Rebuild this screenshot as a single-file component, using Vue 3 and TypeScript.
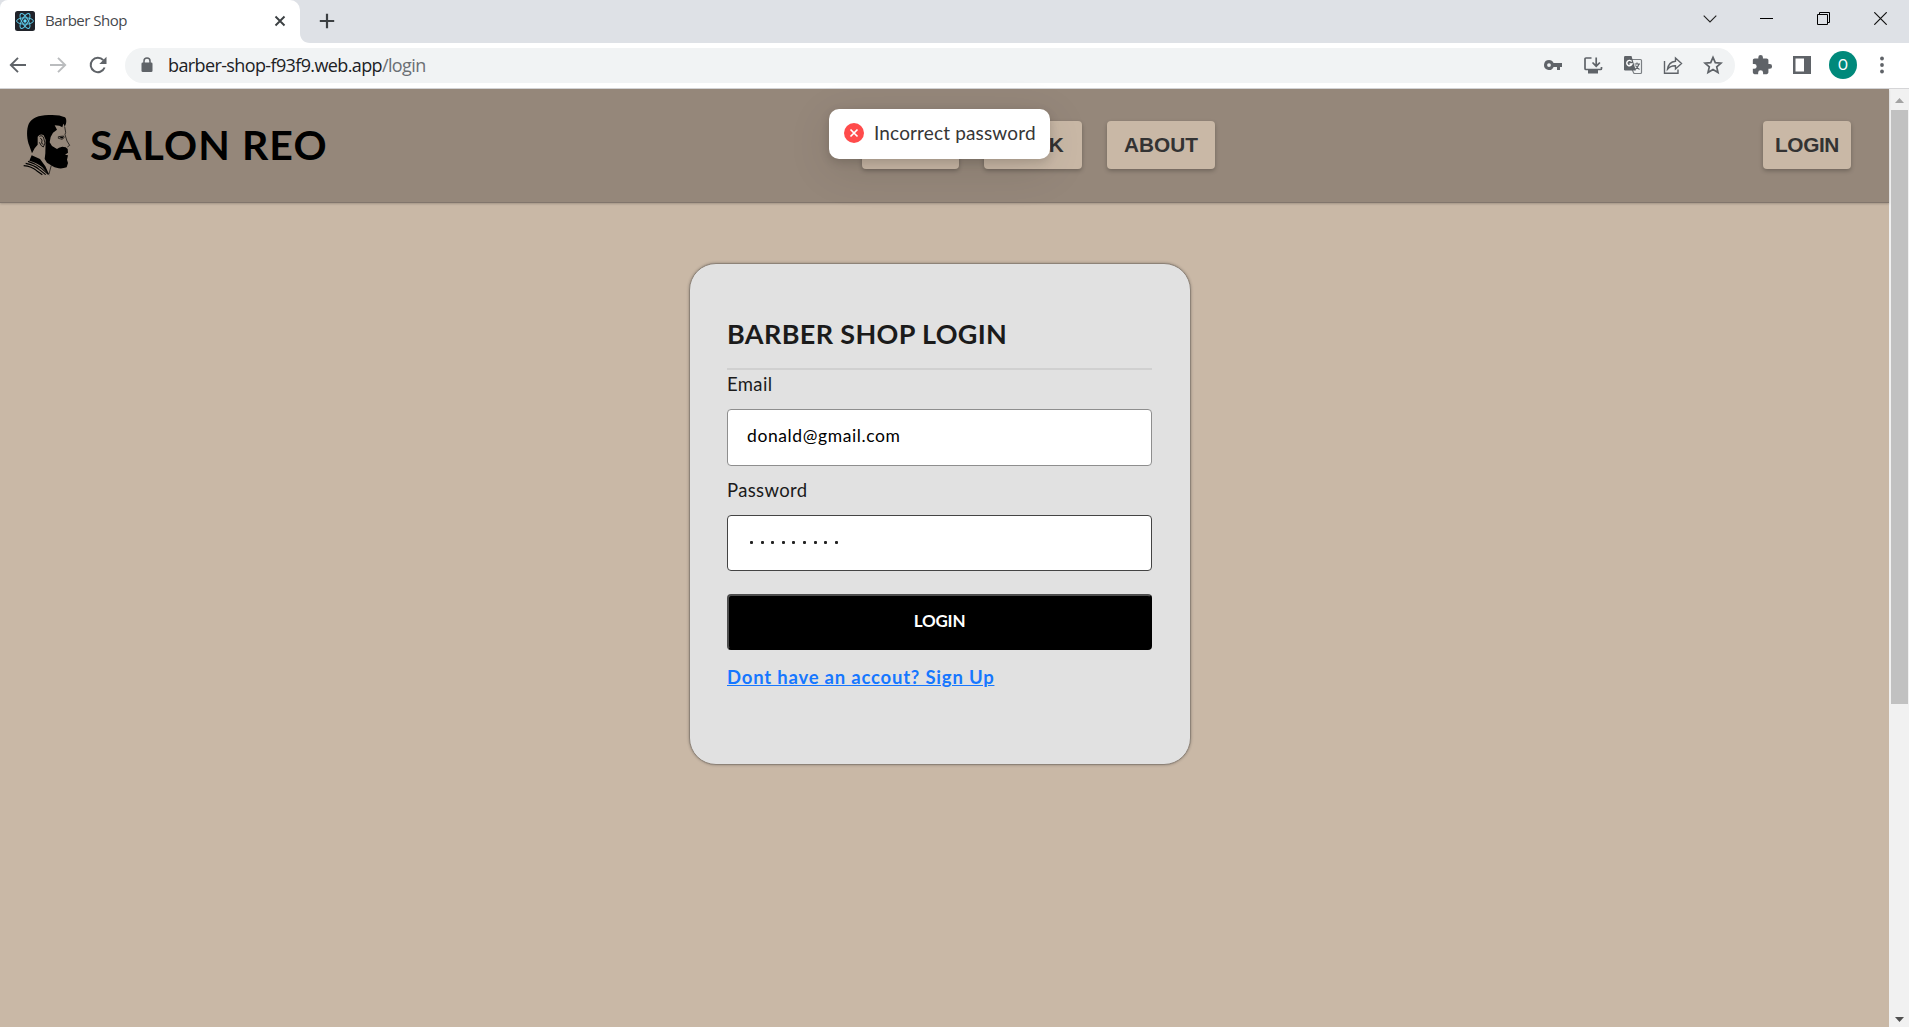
<script setup lang="ts">
import { ref } from 'vue'

const email = ref('donald@gmail.com')
const dots = Array.from({ length: 9 }, (_, i) => i)
const links: string[] = ['HOME', 'BOOK', 'ABOUT']
</script>

<template>
  <div class="window">
    <header class="tabs">
      <div class="tab">
        <svg class="favicon" width="20" height="20" viewBox="0 0 20 20">
          <rect width="20" height="20" rx="2.5" fill="#20232a" />
          <g fill="none" stroke="#5bc8e6" stroke-width="1">
            <ellipse cx="10" cy="10" rx="8.4" ry="3.2" />
            <ellipse cx="10" cy="10" rx="8.4" ry="3.2" transform="rotate(60 10 10)" />
            <ellipse cx="10" cy="10" rx="8.4" ry="3.2" transform="rotate(120 10 10)" />
          </g>
          <circle cx="10" cy="10" r="1.7" fill="#61dafb" />
        </svg>
        <span class="tab-title">Barber Shop</span>
        <svg class="tab-close" width="12" height="12" viewBox="0 0 12 12"><path d="M1.5 1.5l9 9M10.5 1.5l-9 9" stroke="#3c4043" stroke-width="1.9" /></svg>
      </div>
      <svg class="curve" width="10" height="10" viewBox="0 0 10 10"><path d="M0 0C0 6 4 10 10 10H0z" fill="#fff" /></svg>
      <svg class="plus" width="16" height="16" viewBox="0 0 16 16"><path d="M8 .8v14.4M.8 8h14.4" stroke="#3c4043" stroke-width="2.2" /></svg>
      <div class="controls">
        <span><svg width="14" height="8" viewBox="0 0 14 8"><path d="M.7 .7L7 7l6.300-6.300" fill="none" stroke="#222" stroke-width="1.1" /></svg></span>
        <span><svg width="13" height="13" viewBox="0 0 13 13"><path d="M0 6.500h13" stroke="#000" stroke-width="1" /></svg></span>
        <span><svg width="13" height="13" viewBox="0 0 13 13"><path d="M.5 2.500h10v10h-10zM2.500 2.500v-2h10v10h-2" fill="none" stroke="#000" stroke-width="1" /></svg></span>
        <span><svg width="13" height="13" viewBox="0 0 13 13"><path d="M.3 .3l12.400 12.400M12.700 .3L.3 12.700" stroke="#111" stroke-width="1.200" /></svg></span>
      </div>
    </header>

    <div class="toolbar">
      <svg class="nav-icon" width="18" height="18" viewBox="0 0 18 18"><path d="M17 9H2M9 1.800L1.800 9 9 16.200" fill="none" stroke="#5f6368" stroke-width="1.900" /></svg>
      <svg class="nav-icon" width="18" height="18" viewBox="0 0 18 18"><path d="M1 9h15M9 1.800L16.200 9 9 16.200" fill="none" stroke="#babcbe" stroke-width="1.900" /></svg>
      <svg class="nav-icon" width="18" height="18" viewBox="0 0 18 18"><path d="M15.600 11.500A7.200 7.200 0 1 1 14.300 4.200" fill="none" stroke="#5f6368" stroke-width="2" /><path d="M17.500 .8V8h-7.200z" fill="#5f6368" /></svg>
      <div class="omnibox">
        <svg class="lock" width="12" height="16" viewBox="0 0 12 16"><rect x=".5" y="5.500" width="11" height="9.500" rx="1.300" fill="#5f6368" /><path d="M3 6V4a3 3 0 0 1 6 0v2" fill="none" stroke="#5f6368" stroke-width="1.500" /></svg>
        <span class="url">barber-shop-f93f9.web.app<em>/login</em></span>
        <div class="slots">
          <span><svg width="20" height="20" viewBox="0 0 20 20"><path fill-rule="evenodd" d="M6 5a5 5 0 1 0 4.600 7H14v3h3v-3h2V8h-8.400A5 5 0 0 0 6 5zm0 3.200a1.900 1.900 0 1 1 0 3.800 1.900 1.900 0 0 1 0-3.800z" fill="#5f6368" /></svg></span>
          <span><svg width="20" height="20" viewBox="0 0 20 20"><path d="M8.500 3H3Q2 3 2 4v9.500Q2 14.500 3 14.500h14.500q1 0 1-1V12M13.200 2.500v8.500M9.500 7.500l3.700 3.700 3.700-3.700" fill="none" stroke="#5f6368" stroke-width="1.700" /><path d="M5 15h10v3.500H5z" fill="#5f6368" /></svg></span>
          <span><svg width="20" height="20" viewBox="0 0 20 20"><path d="M9 4.500h8.500q1 0 1 1v12q0 1-1 1H11l-2-4" fill="#f1f3f4" stroke="#7b7f83" stroke-width="1.200" /><path d="M2.200 1h6.300l4.300 14.500H2.200Q1 15.500 1 14.300V2.200Q1 1 2.200 1z" fill="#5f6368" /><path d="M8.700 6.500A2.700 2.700 0 1 0 9 9H6.500" fill="none" stroke="#fff" stroke-width="1.400" /><path d="M11.500 9H17M14 7.500V9M16 9q-1 3.500-4 5.500M12.500 10.500q1.500 2.500 4 4" fill="none" stroke="#5f6368" stroke-width="1.100" /></svg></span>
          <span><svg width="20" height="20" viewBox="0 0 20 20"><path d="M1.500 6v12.300H15V14.500" fill="none" stroke="#5f6368" stroke-width="1.400" /><path d="M12.500 3l6 5.500-6 5.500v-3.200q-4.800-.3-8 3.400Q5.500 7 12.500 6.200z" fill="none" stroke="#5f6368" stroke-width="1.400" /></svg></span>
          <span><svg width="20" height="20" viewBox="0 0 20 20"><path d="M10 2.300l2.300 5.300 5.800.5-4.400 3.800 1.300 5.600-5-3-5 3 1.300-5.600L1.900 8.100l5.800-.5z" fill="none" stroke="#5f6368" stroke-width="1.700" /></svg></span>
        </div>
      </div>
      <div class="slots outer">
        <span><svg width="22" height="22" viewBox="0 0 24 24"><path d="M20.500 11H19V7c0-1.100-.9-2-2-2h-4V3.500a2.500 2.500 0 0 0-5 0V5H4c-1.100 0-2 .9-2 2v3.800h1.500a2.700 2.700 0 0 1 0 5.400H2V20c0 1.100.9 2 2 2h3.800v-1.500a2.700 2.700 0 0 1 5.400 0V22H17c1.100 0 2-.9 2-2v-4h1.500a2.500 2.500 0 0 0 0-5z" fill="#5f6368" /></svg></span>
        <span><svg width="18" height="18" viewBox="0 0 18 18"><path fill-rule="evenodd" d="M0 0h18v18H0zM2.500 2.500v13H11v-13z" fill="#5f6368" /></svg></span>
        <span class="wide"><b class="avatar">O</b></span>
        <span class="narrow"><svg width="4" height="18" viewBox="0 0 4 18"><g fill="#5f6368"><circle cx="2" cy="2.500" r="1.900" /><circle cx="2" cy="9" r="1.900" /><circle cx="2" cy="15.500" r="1.900" /></g></svg></span>
      </div>
    </div>

    <div class="viewport">
      <div class="page">
        <nav class="navbar">
          <div class="brand">
            <svg width="50" height="64" viewBox="36 24 150 192">
              <path d="M66 145L58 122C51 105 49 80 54 63C59 44 78 33 104 31C130 28 152 30 165 37C170 41 171 55 164 65C163 61 162 58 160 56L157 67L148 62L134 61L141 74L129 83L122 96L119 112L126 123L141 132L147 128L157 125L167 127L173 132L174 143L165 149L174 151L171 164L174 174L170 187C156 192 141 191 128 184L111 173L104 162L106 145L107 104L101 91Q91 85 83 95L83 119L74 130Z" />
              <path d="M88 94q10-5 13 5l4 15-5 12-6-4-6-10M91 99l5 6-1 10 5 3" fill="none" stroke="#000" stroke-width="2.500" />
              <path d="M145 95l16-2 1 5-5 5-12-3zM164 65l3 17-2 7 6 19 8 13-7 5" fill="none" stroke="#000" stroke-width="2" />
              <path d="M146 95h15l-4 6z" />
              <path d="M65 151L90 162L106 184L119 212L97 187Q82 173 58 167Z" />
              <path d="M54 169Q75 175 92 188L115 208M47 175Q73 180 87 193L107 209M41 182Q65 184 80 197L97 209" fill="none" stroke="#000" stroke-width="3.500" />
              <path d="M124 181l-4 14-3 12" fill="none" stroke="#000" stroke-width="2" />
            </svg>
            <h1>SALON REO</h1>
          </div>
          <div class="links">
            <button v-for="link in links" :key="link" :class="link.toLowerCase()">{{ link }}</button>
          </div>
          <button class="signin">LOGIN</button>
        </nav>

        <main>
          <form class="card" @submit.prevent>
            <h2><span>BARBER SHOP LOGIN</span></h2>
            <label class="l-email">Email</label>
            <div class="field email"><span>{{ email }}</span></div>
            <label class="l-pass">Password</label>
            <div class="field pass"><i v-for="d in dots" :key="d"></i></div>
            <button class="submit"><span>LOGIN</span></button>
            <a class="signup">Dont have an accout? Sign Up</a>
          </form>
        </main>

        <div class="toast">
          <svg width="20" height="20" viewBox="0 0 20 20"><circle cx="10" cy="10" r="10" fill="#ff4b4b" /><path d="M6.500 6.500l7 7M13.500 6.500l-7 7" stroke="#fff" stroke-width="1.700" /></svg>
          <span>Incorrect password</span>
        </div>
      </div>
      <div class="scrollbar">
        <svg width="9" height="5" viewBox="0 0 9 5"><path d="M0 5L4.500 0 9 5z" fill="#a3a3a3" /></svg>
        <div class="thumb"></div>
        <svg class="down" width="9" height="5" viewBox="0 0 9 5"><path d="M0 0h9L4.500 5z" fill="#505050" /></svg>
      </div>
    </div>
  </div>
</template>

<style>
body {
  margin: 0;
  overflow: hidden;
}
</style>

<style scoped>
.window {
  width: 1909px;
  height: 1027px;
  display: flex;
  flex-direction: column;
  overflow: hidden;
  font-family: Lato, sans-serif;
}
.window * { box-sizing: border-box; }
svg { display: block; flex: none; }
.tabs {
  height: 43px;
  flex: none;
  display: flex;
  background: #dee1e6;
}
.tab {
  width: 300px;
  display: flex;
  align-items: center;
  padding: 0 14px 1px 15px;
  background: #fff;
  border-radius: 8px 10px 0 0;
}
.tab-title {
  margin-left: 10px;
  padding-bottom: 2px;
  flex: 1;
  font: 15px "Open Sans", sans-serif;
  letter-spacing: -0.500px;
  color: #45484c;
}
.curve { align-self: flex-end; }
.plus { margin: 13px 0 0 9px; }
.controls {
  display: flex;
  margin-left: auto;
  height: 37px;
}
.controls span {
  width: 57px;
  display: flex;
  align-items: center;
  justify-content: center;
}
.toolbar {
  height: 46px;
  flex: none;
  display: flex;
  align-items: center;
  padding: 0 8px 1px 9px;
  background: #fff;
  border-bottom: 1px solid #d5d5d7;
}
.nav-icon { margin-right: 22px; }
.nav-icon:nth-child(3) { margin-right: 18px; }
.omnibox {
  width: 1610px;
  height: 35px;
  display: flex;
  align-items: center;
  padding: 0 2px 0 16px;
  border-radius: 18px;
  background: #f1f3f4;
}
.url {
  flex: 1;
  margin-left: 15px;
  font: 18px/24px "Open Sans", sans-serif;
  letter-spacing: -0.620px;
  color: #202124;
}
.url em { font-style: normal; color: #6b6f74; }
.slots { display: flex; }
.slots span {
  width: 40px;
  display: flex;
  align-items: center;
  justify-content: center;
}
.outer { margin-left: 7px; }
.outer .wide { width: 42px; }
.outer .narrow { width: 36px; }
.avatar {
  width: 28px;
  height: 28px;
  border-radius: 50%;
  background: #00897b;
  color: #fff;
  font: 15px/28px Roboto, sans-serif;
  text-align: center;
}
.viewport { flex: 1; display: flex; min-height: 0; }
.page {
  position: relative;
  width: 1889px;
  background: #c9b8a6;
}
.navbar {
  height: 114px;
  display: flex;
  align-items: center;
  padding-bottom: 2px;
  background: #95877a;
  border-bottom: 1px solid #81756c;
  box-shadow: 0 1px 2px rgba(0, 0, 0, 0.2);
}
.brand {
  display: flex;
  align-items: center;
  width: 862px;
  padding-left: 22px;
}
h1 {
  margin: 0 0 0 18px;
  font-size: 41px;
  line-height: 50px;
  font-weight: 700;
  letter-spacing: 1.100px;
  white-space: nowrap;
}
.links { display: flex; gap: 25px; }
.navbar button {
  height: 48px;
  padding: 0;
  border: 0;
  border-radius: 4px;
  background: #c9b8a6;
  color: #333;
  font: 700 20.800px/48px "Liberation Sans", sans-serif;
  letter-spacing: -0.400px;
  box-shadow: 0 2px 4px rgba(0, 0, 0, 0.25);
}
.navbar .home { width: 97px; }
.navbar .book { width: 98px; }
.navbar .about { width: 108px; letter-spacing: 0; }
.navbar .signin { width: 88px; margin: 0 38px 0 auto; }
main { padding: 60px 0 0 689px; }
.card {
  width: 502px;
  height: 502px;
  display: flex;
  flex-direction: column;
  padding: 38px 38px 38px 37px;
  border: 1px solid #8d8277;
  border-radius: 27px;
  background: #e1e1e1;
  box-shadow: 0 0 3px rgba(0, 0, 0, 0.3);
  color: #1b1b1b;
}
h2 {
  height: 68px;
  margin: 0;
  padding-top: 16px;
  border-bottom: 2px solid #d0d0d0;
  font-size: 27px;
  line-height: 32px;
  font-weight: 700;
  letter-spacing: 0.350px;
}
label {
  height: 39px;
  padding-top: 2px;
  font-size: 18.500px;
  letter-spacing: 0.350px;
  line-height: 24px;
}
.l-pass { height: 49px; padding-top: 12px; }
.field {
  height: 57px;
  display: flex;
  align-items: center;
  padding: 0 19px 4px;
  border: 1px solid #8e8e8e;
  border-radius: 4px;
  background: #fff;
  color: #000;
  font-size: 17.500px;
  letter-spacing: 0.600px;
}
.pass { height: 56px; border-color: #444; gap: 7.600px; padding: 0 22px 2px; }
.pass i { width: 3px; height: 3px; background: #222; border-radius: 1px; }
.submit {
  height: 56px;
  flex: none;
  margin-top: 23px;
  padding: 0 0 3px;
  border: 2px solid #000;
  border-top-color: #4d4d4d;
  border-left-color: #4d4d4d;
  border-radius: 4px;
  background: #000;
  color: #fff;
  font: 700 17px Lato, sans-serif;
  letter-spacing: -0.200px;
}
.signup {
  margin-top: 15px;
  align-self: flex-start;
  color: #1677ff;
  font-size: 18.500px;
  letter-spacing: 0.790px;
  line-height: 24px;
  font-weight: 700;
  text-decoration: underline;
  text-decoration-thickness: 1px;
}
.toast {
  position: absolute;
  left: 829px;
  top: 20px;
  width: 221px;
  height: 50px;
  display: flex;
  align-items: center;
  padding: 0 0 2px 15px;
  border-radius: 10px;
  background: #fff;
  box-shadow: 0 3px 10px rgba(0, 0, 0, 0.15), 0 10px 45px rgba(0, 0, 0, 0.1);
  color: #363636;
  font-size: 19px;
  letter-spacing: 0.150px;
  white-space: nowrap;
}
.toast span { margin-left: 10px; padding-bottom: 2px; }
.scrollbar {
  width: 20px;
  display: flex;
  flex-direction: column;
  align-items: center;
  padding: 9px 0 5px;
  background: #f1f1f1;
}
.thumb { width: 17px; height: 594px; margin: 7px 0 0 1px; background: #c1c1c1; }
.down { margin-top: auto; }
</style>
